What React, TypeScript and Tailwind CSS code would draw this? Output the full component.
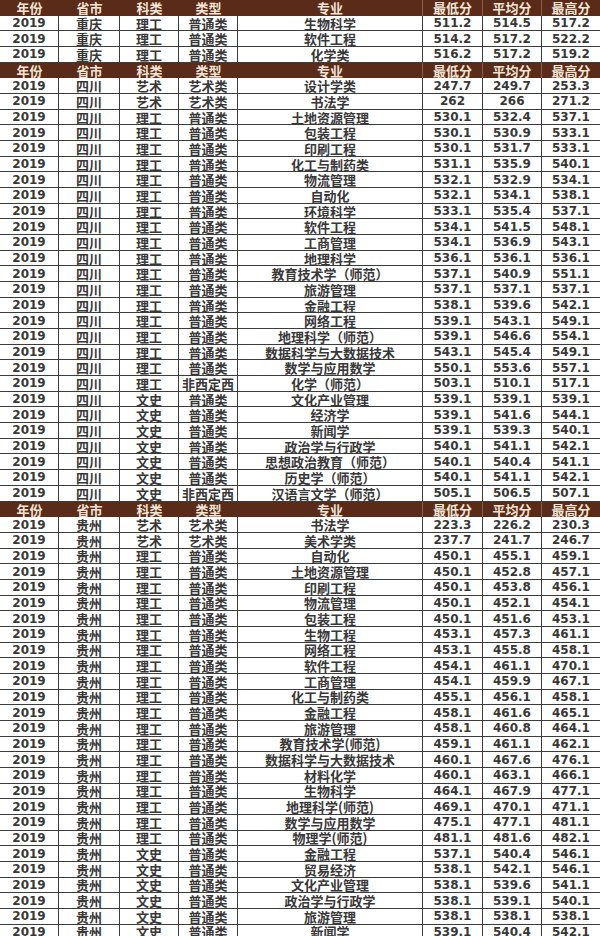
import React from 'react'

type Row = [string, string, string, string, string, string, string, string]

const cols = ['w-[59px]', 'w-[61px]', 'w-[59px]', 'w-[59px]', 'w-[185px]', 'w-[60px]', 'w-[59px]', 'w-[58px]']
const headers = ['年份', '省市', '科类', '类型', '专业', '最低分', '平均分', '最高分']

const mk = (prov: string, list: string[]): Row[] =>
  list.map((l) => {
    const [k, t, m, a, b, c] = l.split(' ')
    return ['2019', prov, k, t, m, a, b, c]
  })

const sections: Row[][] = [
  mk('重庆', [
    '理工 普通类 生物科学 511.2 514.5 517.2',
    '理工 普通类 软件工程 514.2 517.2 522.2',
    '理工 普通类 化学类 516.2 517.2 519.2',
  ]),
  mk('四川', [
    '艺术 艺术类 设计学类 247.7 249.7 253.3',
    '艺术 艺术类 书法学 262 266 271.2',
    '理工 普通类 土地资源管理 530.1 532.4 537.1',
    '理工 普通类 包装工程 530.1 530.9 533.1',
    '理工 普通类 印刷工程 530.1 531.7 533.1',
    '理工 普通类 化工与制药类 531.1 535.9 540.1',
    '理工 普通类 物流管理 532.1 532.9 534.1',
    '理工 普通类 自动化 532.1 534.1 538.1',
    '理工 普通类 环境科学 533.1 535.4 537.1',
    '理工 普通类 软件工程 534.1 541.5 548.1',
    '理工 普通类 工商管理 534.1 536.9 543.1',
    '理工 普通类 地理科学 536.1 536.1 536.1',
    '理工 普通类 教育技术学（师范） 537.1 540.9 551.1',
    '理工 普通类 旅游管理 537.1 537.1 537.1',
    '理工 普通类 金融工程 538.1 539.6 542.1',
    '理工 普通类 网络工程 539.1 543.1 549.1',
    '理工 普通类 地理科学（师范） 539.1 546.6 554.1',
    '理工 普通类 数据科学与大数据技术 543.1 545.4 549.1',
    '理工 普通类 数学与应用数学 550.1 553.6 557.1',
    '理工 非西定西 化学（师范） 503.1 510.1 517.1',
    '文史 普通类 文化产业管理 539.1 539.1 539.1',
    '文史 普通类 经济学 539.1 541.6 544.1',
    '文史 普通类 新闻学 539.1 539.3 540.1',
    '文史 普通类 政治学与行政学 540.1 541.1 542.1',
    '文史 普通类 思想政治教育（师范） 540.1 540.4 541.1',
    '文史 普通类 历史学（师范） 540.1 541.1 542.1',
    '文史 非西定西 汉语言文学（师范） 505.1 506.5 507.1',
  ]),
  mk('贵州', [
    '艺术 艺术类 书法学 223.3 226.2 230.3',
    '艺术 艺术类 美术学类 237.7 241.7 246.7',
    '理工 普通类 自动化 450.1 455.1 459.1',
    '理工 普通类 土地资源管理 450.1 452.8 457.1',
    '理工 普通类 印刷工程 450.1 453.8 456.1',
    '理工 普通类 物流管理 450.1 452.1 454.1',
    '理工 普通类 包装工程 450.1 451.6 453.1',
    '理工 普通类 生物工程 453.1 457.3 461.1',
    '理工 普通类 网络工程 453.1 455.8 458.1',
    '理工 普通类 软件工程 454.1 461.1 470.1',
    '理工 普通类 工商管理 454.1 459.9 467.1',
    '理工 普通类 化工与制药类 455.1 456.1 458.1',
    '理工 普通类 金融工程 458.1 461.6 465.1',
    '理工 普通类 旅游管理 458.1 460.8 464.1',
    '理工 普通类 教育技术学(师范) 459.1 461.1 462.1',
    '理工 普通类 数据科学与大数据技术 460.1 467.6 476.1',
    '理工 普通类 材料化学 460.1 463.1 466.1',
    '理工 普通类 生物科学 464.1 467.9 477.1',
    '理工 普通类 地理科学(师范) 469.1 470.1 471.1',
    '理工 普通类 数学与应用数学 475.1 477.1 481.1',
    '理工 普通类 物理学(师范) 481.1 481.6 482.1',
    '文史 普通类 金融工程 537.1 540.4 546.1',
    '文史 普通类 贸易经济 538.1 542.1 546.1',
    '文史 普通类 文化产业管理 538.1 539.6 541.1',
    '文史 普通类 政治学与行政学 538.1 539.1 540.1',
    '文史 普通类 旅游管理 538.1 538.1 538.1',
    '文史 普通类 新闻学 539.1 540.4 542.1',
  ]),
]

const isNum = (i: number) => i === 0 || i >= 5

function HeaderRow() {
  return (
    <div className="flex h-[15.68px] bg-[#5a2b18] text-[#f1e4d4]">
      {headers.map((h, i) => (
        <div
          key={i}
          className={`${cols[i]} shrink-0 flex items-center justify-center text-[13px] font-bold leading-none ${
            i >= 4 && i < 7 ? 'border-r border-[#8a6350]' : ''
          }`}
        >
          {h}
        </div>
      ))}
    </div>
  )
}

function DataRow({ r }: { r: Row }) {
  return (
    <div className="flex h-[15.68px] border-b border-[#3c3c3c] bg-white text-[#383838] box-border">
      {r.map((v, i) => (
        <div
          key={i}
          className={`${cols[i]} shrink-0 flex items-center justify-center leading-none font-bold ${
            i < 7 ? 'border-r border-[#3c3c3c]' : ''
          } ${isNum(i) ? 'text-[12px] font-["DejaVu_Sans",sans-serif]' : 'text-[13px]'}`}
        >
          {v}
        </div>
      ))}
    </div>
  )
}

export default function App() {
  return (
    <div className="w-[600px] h-[936px] overflow-hidden bg-white font-['Noto_Sans_CJK_SC',sans-serif]">
      {sections.map((s, si) => (
        <div key={si}>
          <HeaderRow />
          {s.map((r, ri) => (
            <DataRow key={ri} r={r} />
          ))}
        </div>
      ))}
    </div>
  )
}
